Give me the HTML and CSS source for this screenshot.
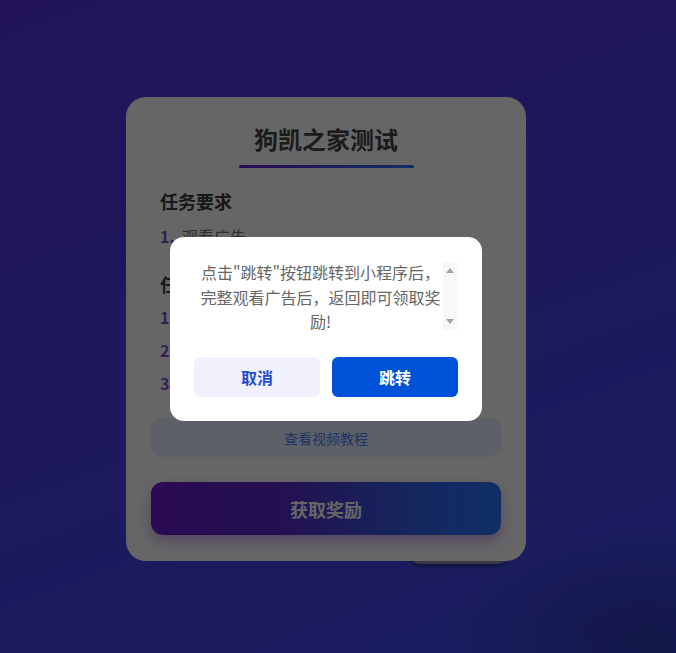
FILE: index.html
```html
<!DOCTYPE html>
<html lang="zh-CN">
<head>
<meta charset="utf-8">
<title>狗凯之家测试</title>
<link rel="stylesheet" href="styles.css">
</head>
<body>
<div class="page">
  <div class="card">
    <div class="card-shadow-tab"></div>
    <h1 class="title">狗凯之家测试</h1>
    <div class="title-bar"></div>

    <section class="section">
      <h2 class="section-title">任务要求</h2>
      <ol class="steps">
        <li><span class="num">1.</span><span class="txt">观看广告</span></li>
      </ol>
    </section>

    <section class="section section-2">
      <h2 class="section-title">任务说明</h2>
      <ol class="steps steps-2">
        <li><span class="num">1</span><span class="txt">点击获取奖励按钮</span></li>
        <li><span class="num">2</span><span class="txt">跳转小程序观看广告</span></li>
        <li><span class="num">3</span><span class="txt">返回领取奖励</span></li>
      </ol>
    </section>

    <button class="btn-video">查看视频教程</button>
    <button class="btn-reward">获取奖励</button>

    <div class="mask"></div>

    <div class="modal">
      <div class="modal-body">
        <div class="modal-text">点击"跳转"按钮跳转到小程序后，完整观看广告后，返回即可领取奖励!</div>
        <div class="fake-scroll">
          <span class="arrow-up"></span>
          <span class="arrow-down"></span>
        </div>
      </div>
      <div class="modal-actions">
        <button class="btn-cancel">取消</button>
        <button class="btn-go">跳转</button>
      </div>
    </div>
  </div>
</div>
</body>
</html>
```

FILE: styles.css
```css
* { box-sizing: border-box; }

html, body {
  margin: 0;
  height: 100%;
}

body {
  font-family: "Noto Sans CJK SC", "Noto Sans", sans-serif;
  background:
    radial-gradient(ellipse 200px 110px at 96% 98%, rgba(30, 40, 120, 0.5), rgba(30, 40, 120, 0) 100%),
    linear-gradient(160deg, #5733e0 0%, #4a40e8 55%, #3f4cf0 100%);
  overflow: hidden;
}

.page {
  width: 652px;
  display: flex;
  justify-content: center;
  padding-top: 97px;
}

.card {
  position: relative;
  width: 400px;
  background: #ffffff;
  border-radius: 20px;
  padding: 26px 25px 26px;
  display: flex;
  flex-direction: column;
}

.card-shadow-tab {
  position: absolute;
  left: 281px;
  bottom: -3px;
  width: 104px;
  height: 24px;
  background: #8a90a4;
  border-radius: 0 0 14px 14px;
  box-shadow: 0 2px 5px rgba(0, 0, 0, 0.45);
  z-index: -1;
}

.title {
  margin: 0;
  text-align: center;
  font-size: 24px;
  line-height: 32px;
  font-weight: 700;
  color: #444;
}

.title-bar {
  width: 175px;
  height: 3px;
  margin: 10px auto 0;
  border-radius: 2px;
  background: linear-gradient(90deg, #6a1bd4, #2a73ff);
}

.section {
  margin-top: 20px;
  padding-left: 9px;
}

.section-2 { margin-top: 23px; }

.section-title {
  margin: 0;
  font-size: 18px;
  line-height: 26px;
  font-weight: 700;
  color: #3a3a3a;
}

.steps {
  list-style: none;
  margin: 10px 0 0;
  padding: 0;
  display: flex;
  flex-direction: column;
  gap: 9px;
}

.steps-2 { margin-top: 8px; }

.steps li {
  display: flex;
  align-items: center;
  height: 24px;
  font-size: 16px;
  color: #707070;
}

.num {
  width: 22px;
  font-weight: 700;
  color: #8a4ad8;
}

.btn-video {
  margin-top: 23px;
  height: 39px;
  border: none;
  border-radius: 10px;
  background: #e9efff;
  color: #4c84ff;
  font-family: inherit;
  font-size: 14px;
}

.btn-reward {
  margin-top: 25px;
  height: 53px;
  border: none;
  border-radius: 12px;
  background: linear-gradient(90deg, #6a1bd4 0%, #5a28c8 35%, #2f68f0 80%, #2873ff 100%);
  color: #ffffff;
  font-family: inherit;
  font-size: 18px;
  font-weight: 700;
  box-shadow: 0 6px 14px rgba(106, 27, 212, 0.35);
}

.mask {
  position: fixed;
  inset: 0;
  background: rgba(0, 0, 0, 0.6);
  z-index: 5;
}

.modal {
  position: absolute;
  left: 44px;
  top: 140px;
  width: 312px;
  background: #ffffff;
  border-radius: 14px;
  padding: 23px 24px 24px;
  z-index: 10;
}

.modal-body {
  display: flex;
  height: 70px;
}

.modal-text {
  flex: 1;
  padding-left: 4px;
  overflow: hidden;
  text-align: center;
  font-size: 16px;
  line-height: 24.5px;
  color: #666666;
}

.fake-scroll {
  position: relative;
  width: 15px;
  margin-top: 2px;
  background: #f8f8f8;
}

.arrow-up, .arrow-down {
  position: absolute;
  left: 3px;
  width: 0;
  height: 0;
  border-left: 4.5px solid transparent;
  border-right: 4.5px solid transparent;
}

.arrow-up {
  top: 6px;
  border-bottom: 5px solid #a3a3a3;
}

.arrow-down {
  bottom: 6px;
  border-top: 5px solid #a3a3a3;
}

.modal-actions {
  display: flex;
  gap: 12px;
  margin-top: 27px;
}

.modal-actions button {
  flex: 1;
  height: 40px;
  border: none;
  border-radius: 6px;
  font-family: inherit;
  font-size: 16px;
  font-weight: 700;
}

.btn-cancel {
  background: #f1f1fd;
  color: #1f4fd0;
}

.btn-go {
  background: #0052d9;
  color: #ffffff;
}
```
